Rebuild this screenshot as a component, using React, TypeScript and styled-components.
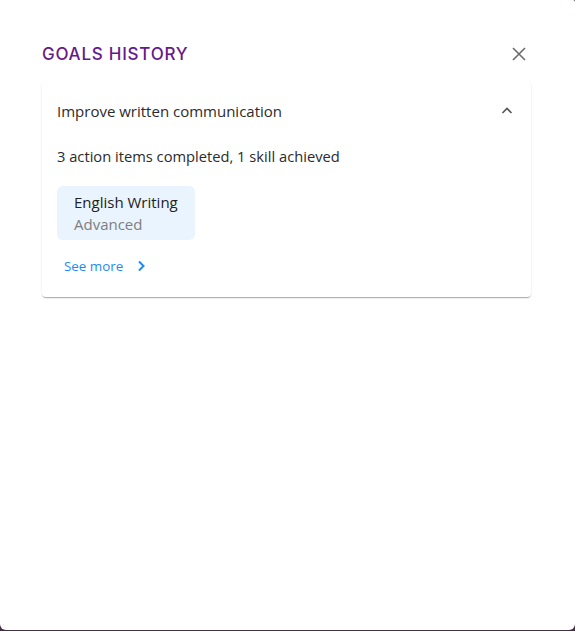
import * as React from "react";
import styled, { createGlobalStyle } from "styled-components";

const GlobalStyle = createGlobalStyle`
  html, body {
    margin: 0;
    padding: 0;
    background: #4b2c48;
  }
  body {
    font-family: "Open Sans", "Liberation Sans", sans-serif;
  }
`;

const Dialog = styled.div`
  background: #ffffff;
  box-sizing: border-box;
  width: 575px;
  height: 630px;
  border-radius: 0 2px 6px 6px;
  padding: 38px 44px 0 42px;
`;

const Header = styled.div`
  align-items: center;
  display: flex;
  justify-content: space-between;
  height: 31px;
`;

const Title = styled.h2`
  color: #68198a;
  font-family: "Inter", "Liberation Sans", sans-serif;
  font-size: 17px;
  font-weight: 500;
  letter-spacing: 0.75px;
  margin: 0;
`;

const CloseButton = styled.button`
  background: none;
  border: none;
  cursor: pointer;
  display: flex;
  margin-right: 4px;
  padding: 0;
`;

const Card = styled.div`
  background: #ffffff;
  border-radius: 4px;
  box-shadow: 0 2px 1px -1px rgba(0, 0, 0, 0.2), 0 1px 1px 0 rgba(0, 0, 0, 0.12),
    0 1px 3px 0 rgba(0, 0, 0, 0.08);
  margin-top: 13px;
  padding: 0 15px 22px 15px;
`;

const CardHeader = styled.div`
  align-items: center;
  display: flex;
  height: 58px;
  justify-content: space-between;
`;

const GoalName = styled.div`
  color: #2b2b2b;
  font-size: 15px;
`;

const ChevronWrap = styled.div`
  display: flex;
  margin-right: 2px;
`;

const Summary = styled.div`
  color: #2b2b2b;
  font-size: 14.7px;
  margin-top: 6px;
`;

const SkillChip = styled.div`
  background: #eaf4fe;
  border-radius: 6px;
  box-sizing: border-box;
  display: inline-flex;
  flex-direction: column;
  gap: 2px;
  margin-top: 20px;
  padding: 6px 17px 6px 17px;
`;

const SkillName = styled.div`
  color: #222222;
  font-size: 15px;
`;

const SkillLevel = styled.div`
  color: #7e7e7e;
  font-size: 15px;
`;

const SeeMore = styled.a`
  align-items: center;
  color: #1a8cf5;
  cursor: pointer;
  display: flex;
  font-size: 13.4px;
  gap: 13px;
  margin-top: 17px;
  padding-left: 7px;
  text-decoration: none;
`;

const CloseIcon = () => (
  <svg width="16" height="16" viewBox="0 0 16 16">
    <path d="M2 2 L14 14 M14 2 L2 14" stroke="#6b6b6b" strokeWidth="1.6" fill="none" />
  </svg>
);

const ChevronUp = () => (
  <svg width="14" height="14" viewBox="0 0 14 14">
    <path d="M2.5 9 L7 4.5 L11.5 9" stroke="#555" strokeWidth="1.6" fill="none" />
  </svg>
);

const ChevronRight = () => (
  <svg width="10" height="12" viewBox="0 0 10 12">
    <path d="M3 1.5 L7.5 6 L3 10.5" stroke="#1a8cf5" strokeWidth="2" fill="none" />
  </svg>
);

export default function App() {
  return (
    <>
      <GlobalStyle />
      <Dialog>
        <Header>
          <Title>GOALS HISTORY</Title>
          <CloseButton aria-label="Close">
            <CloseIcon />
          </CloseButton>
        </Header>
        <Card>
          <CardHeader>
            <GoalName>Improve written communication</GoalName>
            <ChevronWrap>
              <ChevronUp />
            </ChevronWrap>
          </CardHeader>
          <Summary>3 action items completed, 1 skill achieved</Summary>
          <SkillChip>
            <SkillName>English Writing</SkillName>
            <SkillLevel>Advanced</SkillLevel>
          </SkillChip>
          <SeeMore>
            See more
            <ChevronRight />
          </SeeMore>
        </Card>
      </Dialog>
    </>
  );
}
